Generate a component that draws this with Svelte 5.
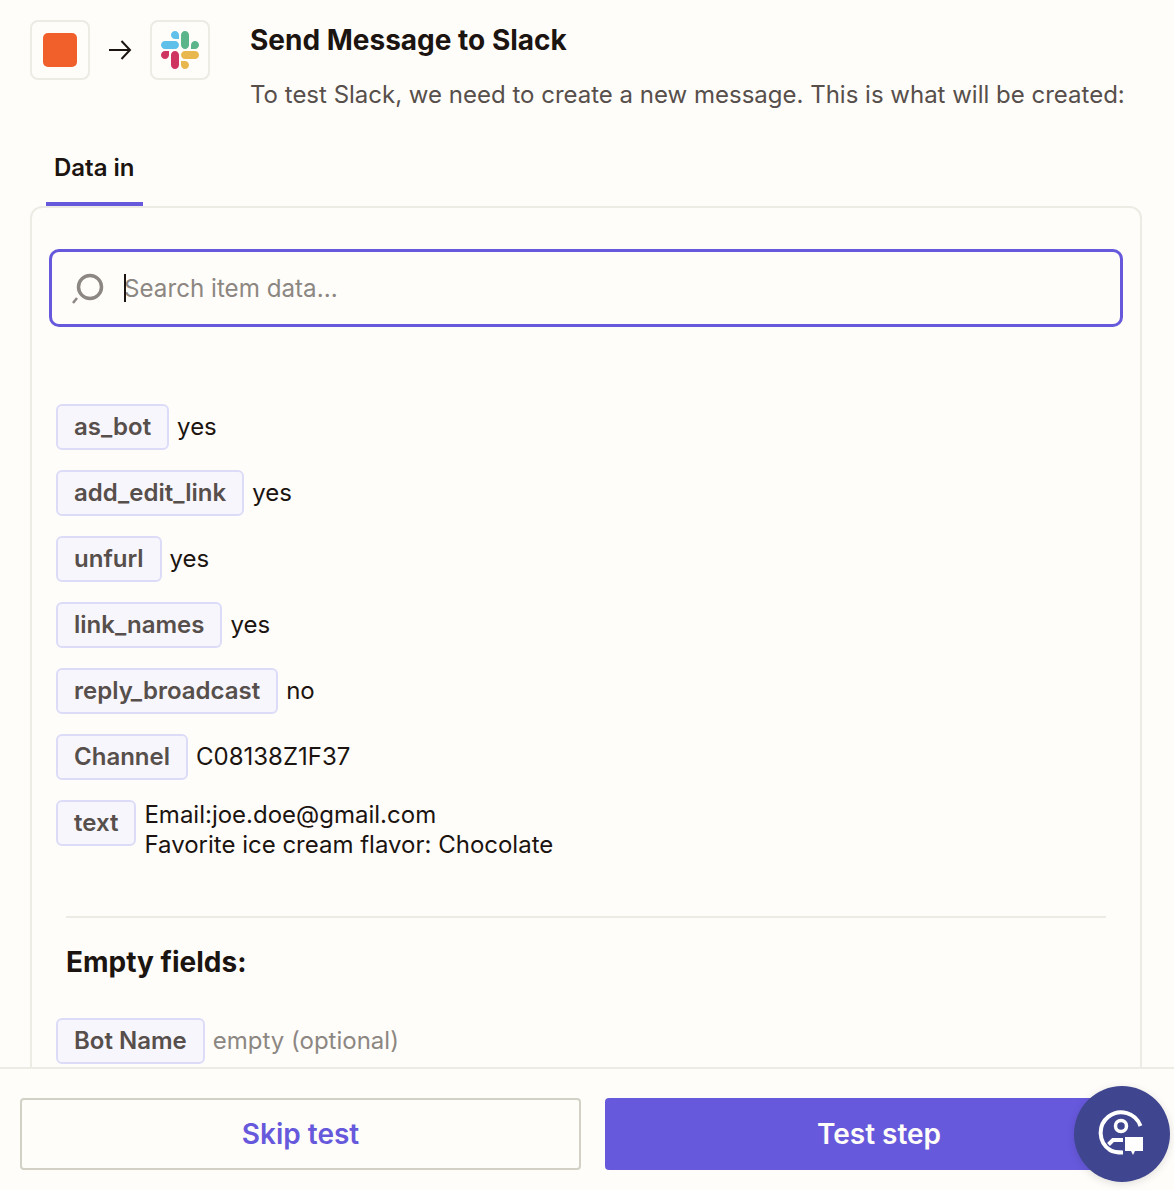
<script lang="ts">
  const fields = [
    { key: 'as_bot', value: 'yes' },
    { key: 'add_edit_link', value: 'yes' },
    { key: 'unfurl', value: 'yes' },
    { key: 'link_names', value: 'yes' },
    { key: 'reply_broadcast', value: 'no' },
    { key: 'Channel', value: 'C08138Z1F37' }
  ];
</script>

<div class="page">
  <div class="main">
    <header class="head">
      <div class="apps">
        <div class="app-icon"><span class="square"></span></div>
        <svg class="arrow" width="24" height="24" viewBox="0 0 24 24" fill="none" stroke="#1b1410" stroke-width="2">
          <path d="M1 12h21M13.500 3l8.500 9-8.500 9" />
        </svg>
        <div class="app-icon">
          <svg width="38" height="38" viewBox="0 0 122.800 122.800">
            <path fill="#cf3561" d="M25.800 77.600c0 7.100-5.800 12.900-12.900 12.900S0 84.700 0 77.600s5.800-12.900 12.900-12.900h12.900v12.900z" />
            <path fill="#cf3561" d="M32.300 77.600c0-7.100 5.800-12.900 12.900-12.900s12.900 5.800 12.900 12.900v32.300c0 7.100-5.800 12.900-12.900 12.900s-12.900-5.800-12.900-12.900V77.600z" />
            <path fill="#5fc0ea" d="M45.200 25.800c-7.100 0-12.900-5.800-12.900-12.900S38.100 0 45.200 0s12.900 5.800 12.900 12.900v12.900H45.200z" />
            <path fill="#5fc0ea" d="M45.200 32.300c7.100 0 12.900 5.800 12.900 12.900s-5.800 12.900-12.900 12.900H12.900C5.800 58.100 0 52.300 0 45.200s5.800-12.900 12.900-12.900h32.300z" />
            <path fill="#5ab58a" d="M97 45.200c0-7.100 5.800-12.900 12.900-12.900s12.900 5.800 12.900 12.900-5.800 12.900-12.900 12.900H97V45.200z" />
            <path fill="#5ab58a" d="M90.500 45.200c0 7.100-5.800 12.900-12.900 12.900s-12.900-5.800-12.900-12.900V12.900C64.700 5.800 70.500 0 77.600 0s12.900 5.800 12.900 12.900v32.300z" />
            <path fill="#e8b84f" d="M77.600 97c7.100 0 12.900 5.800 12.900 12.900s-5.800 12.900-12.900 12.900-12.900-5.800-12.900-12.900V97h12.900z" />
            <path fill="#e8b84f" d="M77.600 90.500c-7.100 0-12.900-5.800-12.900-12.900s5.800-12.900 12.900-12.900h32.300c7.100 0 12.900 5.800 12.900 12.900s-5.800 12.900-12.900 12.900H77.600z" />
          </svg>
        </div>
      </div>
      <div class="titles">
        <h1>Send Message to Slack</h1>
        <p>To test Slack, we need to create a new message. This is what will be created:</p>
      </div>
    </header>

    <nav class="tabs">
      <span class="tab">Data in</span>
    </nav>

    <section class="card">
      <div class="search">
        <svg width="32" height="32" viewBox="0 0 32 32" fill="none" stroke="#8c8782" stroke-width="3.500">
          <circle cx="18" cy="15" r="11.500" />
          <path d="M5 26l-4 5" stroke-width="2.500" />
        </svg>
        <div class="search-field">
          <span class="caret"></span>
          <input type="text" placeholder="Search item data..." />
        </div>
      </div>

      <div class="fields">
        {#each fields as field}
          <div class="row">
            <span class="tag">{field.key}</span>
            <span class="value">{field.value}</span>
          </div>
        {/each}
        <div class="row top">
          <span class="tag">text</span>
          <span class="value">Email:joe.doe@gmail.com<br />Favorite ice cream flavor: Chocolate</span>
        </div>
      </div>

      <div class="empty">
        <h2>Empty fields:</h2>
        <div class="row">
          <span class="tag">Bot Name</span>
          <span class="value muted">empty (optional)</span>
        </div>
      </div>
    </section>
  </div>

  <footer class="foot">
    <button class="btn ghost">Skip test</button>
    <button class="btn solid">Test step</button>
  </footer>

  <button class="help" aria-label="Help">
    <svg width="48" height="48" viewBox="0 0 48 48" fill="none" stroke="#fff" stroke-width="4">
      <path d="M42.500 16A20.500 20.500 0 1 0 12 40c3 2 7 2.500 13 2.500" />
      <circle cx="23" cy="16" r="5.500" stroke-width="3.500" />
      <path d="M25 30H15l-4.500 4.500" />
      <path d="M27 27h18v14H37l-2 4-2-4h-6z" fill="#fff" stroke="none" />
    </svg>
  </button>
</div>

<style>
  :global(body) {
    background: #fffdf9;
  }

  .page {
    position: relative;
    display: flex;
    flex-direction: column;
    height: 1190px;
    overflow: hidden;
    font-family: Inter, "Liberation Sans", sans-serif;
    color: #1b1410;
    background: #fffdf9;
  }

  .main {
    flex: 1;
    min-height: 0;
    overflow: hidden;
    padding: 20px 32px 0 30px;
  }

  .head {
    display: flex;
    gap: 40px;
  }

  .apps {
    display: flex;
    align-items: center;
    gap: 18px;
    height: 60px;
  }

  .app-icon {
    display: flex;
    align-items: center;
    justify-content: center;
    width: 60px;
    height: 60px;
    box-sizing: border-box;
    border: 2px solid #ecebe4;
    border-radius: 8px;
  }

  .square {
    width: 34px;
    height: 34px;
    border-radius: 5px;
    background: #f1602b;
  }

  .titles h1 {
    margin: 0;
    font-size: 28px;
    line-height: 40px;
    font-weight: 700;
  }

  .titles p {
    margin: 15px 0 0;
    font-size: 24px;
    line-height: 40px;
    color: #574f4b;
    white-space: nowrap;
  }

  .tabs {
    display: flex;
    margin-top: 19px;
    padding-left: 16px;
  }

  .tab {
    padding: 0 8px;
    font-size: 24px;
    font-weight: 600;
    line-height: 68px;
    border-bottom: 4px solid #6759dc;
  }

  .card {
    box-sizing: border-box;
    min-height: 900px;
    padding: 41px 17px 0;
    border: 2px solid #ecebe4;
    border-radius: 12px;
  }

  .search {
    display: flex;
    align-items: center;
    gap: 20px;
    height: 78px;
    box-sizing: border-box;
    padding: 0 20px;
    border: 3px solid #6759dc;
    border-radius: 10px;
  }

  .search-field {
    position: relative;
    flex: 1;
  }

  .caret {
    position: absolute;
    left: 0;
    top: 0;
    width: 2px;
    height: 28px;
    background: #1b1410;
  }

  input {
    display: block;
    width: 100%;
    padding: 1px 0 0;
    border: none;
    outline: none;
    background: transparent;
    font: inherit;
    font-size: 24.200px;
    line-height: 28px;
  }

  input::placeholder {
    color: #8c8782;
    opacity: 1;
  }

  .fields {
    display: flex;
    flex-direction: column;
    gap: 20px;
    margin-top: 77px;
    padding-left: 7px;
  }

  .row {
    display: flex;
    align-items: center;
    gap: 8px;
  }

  .row.top {
    align-items: flex-start;
  }

  .tag {
    box-sizing: border-box;
    height: 46px;
    padding: 0 16px;
    border: 2px solid #dcdcf9;
    border-radius: 6px;
    background: #f7f6fd;
    font-size: 24px;
    font-weight: 600;
    line-height: 42px;
    color: #574f4b;
  }

  .value {
    font-size: 24px;
    line-height: 30px;
  }

  .muted {
    color: #8c8782;
  }

  .empty {
    margin: 56px 17px 0;
    padding-top: 30px;
    border-top: 2px solid #ecebe4;
  }

  .empty h2 {
    margin: 0 0 42px;
    font-size: 28px;
    font-weight: 700;
    line-height: 28px;
  }

  .empty .row {
    margin-left: -10px;
  }

  .foot {
    display: flex;
    gap: 24px;
    flex-shrink: 0;
    height: 123px;
    box-sizing: border-box;
    padding: 29px 21px 0 20px;
    border-top: 2px solid #ecebe4;
    background: #fffdf9;
  }

  .btn {
    height: 72px;
    box-sizing: border-box;
    border-radius: 4px;
    font: inherit;
    font-size: 28px;
    font-weight: 600;
  }

  .ghost {
    flex: 0 0 561px;
    border: 2px solid #d3d1c6;
    background: transparent;
    color: #6759dc;
  }

  .solid {
    flex: 1;
    border: none;
    background: #6759dc;
    color: #fffdf9;
  }

  .help {
    position: absolute;
    left: 1074px;
    top: 1086px;
    display: flex;
    align-items: center;
    justify-content: center;
    width: 96px;
    height: 96px;
    padding: 0;
    border: none;
    border-radius: 50%;
    background: #3f458f;
    box-shadow: 0 2px 8px rgba(0, 0, 0, 0.12);
  }
</style>
